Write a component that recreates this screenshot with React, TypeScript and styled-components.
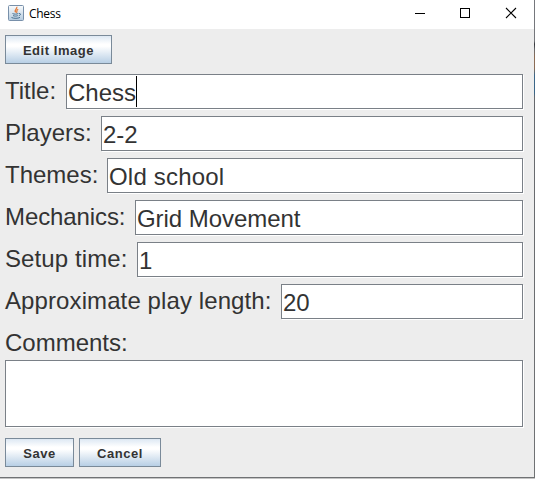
import React from "react";
import styled, { createGlobalStyle } from "styled-components";

const Global = createGlobalStyle`
  * { box-sizing: border-box; }
  html, body { margin: 0; overflow: hidden; background: #c4c4c4; }
`;

const Window = styled.div`
  width: 535px;
  height: 478px;
  display: flex;
  flex-direction: column;
  background: #ededed;
  border-right: 1px solid;
  border-bottom: 1px solid;
  border-image: linear-gradient(#75777c 0, #75777c 42px, #33353a 45px, #66696d 50px, #8b6c55 58px, #8b6c55 69px, #3b6688 76px, #3b6688 94px, #66696d 98px, #707274 100%) 1;
  font-family: "Liberation Sans", Arial, sans-serif;
  color: #333;
`;

const TitleBar = styled.header`
  height: 29px;
  flex: none;
  display: flex;
  align-items: center;
  padding: 0 17px 3px 8px;
  background: #fff;
  color: #000;
`;

const WindowTitle = styled.span`
  flex: 1;
  margin: 1px 0 0 5px;
  font: 12px/16px "Open Sans", sans-serif;
  letter-spacing: -0.3px;
`;

const WindowControls = styled.div`
  display: flex;
  gap: 34px;
`;

const Content = styled.main`
  display: flex;
  flex-direction: column;
  padding: 6px 11px 0 5px;
`;

const Button = styled.button<{ $width: number }>`
  width: ${(p) => p.$width}px;
  height: 29px;
  padding: 2px 0 0;
  border: 1px solid #7a8a99;
  background: linear-gradient(#dde8f3 0%, #fff 30%, #fff 38%, #b8cfe5 100%);
  color: #333;
  font: bold 13px/25px "Liberation Sans", Arial, sans-serif;
  letter-spacing: 0.55px;
`;

const Fields = styled.div`
  display: flex;
  flex-direction: column;
  gap: 7px;
  margin-top: 10px;
`;

const Row = styled.label`
  display: flex;
  height: 35px;
`;

const CommentsHeading = styled.div`
  display: flex;
  height: 34px;
  margin-top: 7px;
`;

const Label = styled.span<{ $width: number; $spacing?: number }>`
  width: ${(p) => p.$width}px;
  flex: none;
  font-size: 24px;
  line-height: 34px;
  letter-spacing: ${(p) => p.$spacing ?? 0}px;
  white-space: nowrap;
`;

const Field = styled.span<{ $spacing?: number }>`
  flex: 1;
  display: flex;
  border: 1px solid #7a8087;
  box-shadow: 1px 1px 0 #fff;
  background: #fff;
  padding: 0 1px;
  font-size: 24px;
  line-height: 36px;
  letter-spacing: ${(p) => p.$spacing ?? 0}px;
  white-space: nowrap;
`;

const Caret = styled.i`
  width: 1px;
  height: 31px;
  margin-top: 1px;
  background: #000;
`;

const Comments = styled.div`
  height: 67px;
  border: 1px solid #7a8087;
  box-shadow: 1px 1px 0 #fff;
  background: #fff;
`;

const Actions = styled.footer`
  display: flex;
  gap: 5px;
  margin-top: 11px;
`;

const JavaIcon = () => (
  <svg width="16" height="16" viewBox="0 0 16 16" fill="none">
    <defs>
      <linearGradient id="tile" x2="0" y2="1">
        <stop stopColor="#fafcfd" />
        <stop offset="1" stopColor="#b4cbdf" />
      </linearGradient>
    </defs>
    <rect x=".5" y=".5" width="15" height="15" rx="1" fill="url(#tile)" stroke="#7890aa" />
    <path d="M8.8 1.8C9.6 4 5.9 4.3 7.6 7.4M10.2 4.2C7.6 5.5 9.8 6 8.4 7.8" stroke="#e47a38" strokeWidth="1.2" />
    <path d="M4.5 8.5C6 9.4 9 9.3 10.3 8.5M5 10.6C6.5 11.3 8.7 11.2 9.8 10.6M3.5 12.5C6 13.7 10 13.5 12 12.4M11 8.6C13.3 8.2 12.9 10.2 10.8 10.7" stroke="#49708f" />
  </svg>
);

const MinimizeIcon = () => (
  <svg width="12" height="12" shapeRendering="crispEdges">
    <path d="M2 6.5H12" stroke="#000" />
  </svg>
);
const MaximizeIcon = () => (
  <svg width="12" height="12" shapeRendering="crispEdges">
    <rect x="1.5" y="1.5" width="9" height="9" fill="none" stroke="#000" />
  </svg>
);
const CloseIcon = () => (
  <svg width="12" height="12">
    <path d="M1 1L11 11M11 1L1 11" stroke="#000" strokeWidth="1.1" />
  </svg>
);

const rows = [
  { label: "Title:", value: "Chess", width: 61, caret: true },
  { label: "Players:", value: "2-2", width: 96 },
  { label: "Themes:", value: "Old school", width: 102, valueSpacing: 0.2 },
  { label: "Mechanics:", value: "Grid Movement", width: 130, labelSpacing: -0.1, valueSpacing: -0.05 },
  { label: "Setup time:", value: "1", width: 132, labelSpacing: 0.1 },
  { label: "Approximate play length:", value: "20", width: 276, labelSpacing: 0.1 },
];

export default function App() {
  return (
    <>
      <Global />
      <Window>
        <TitleBar>
          <JavaIcon />
          <WindowTitle>Chess</WindowTitle>
          <WindowControls>
            <MinimizeIcon />
            <MaximizeIcon />
            <CloseIcon />
          </WindowControls>
        </TitleBar>
        <Content>
          <Button $width={107}>Edit Image</Button>
          <Fields>
            {rows.map((r) => (
              <Row key={r.label}>
                <Label $width={r.width} $spacing={r.labelSpacing}>{r.label}</Label>
                <Field $spacing={r.valueSpacing}>
                  {r.value}
                  {r.caret && <Caret />}
                </Field>
              </Row>
            ))}
          </Fields>
          <CommentsHeading>
            <Label $width={130}>Comments:</Label>
          </CommentsHeading>
          <Comments />
          <Actions>
            <Button $width={69}>Save</Button>
            <Button $width={82}>Cancel</Button>
          </Actions>
        </Content>
      </Window>
    </>
  );
}
